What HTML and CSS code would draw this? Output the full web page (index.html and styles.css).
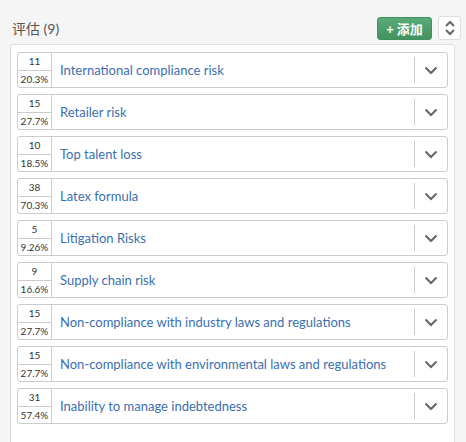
FILE: index.html
```html
<!DOCTYPE html>
<html>
<head>
<meta charset="utf-8">
<link rel="stylesheet" href="styles.css">
</head>
<body>
<div class="page">
  <div class="header">
    <div class="title">评估 (9)</div>
    <div class="actions">
      <button class="btn-add">+ 添加</button>
      <button class="btn-sort"><svg width="12" height="16" viewBox="0 0 12 16"><path d="M2 6 L6 2 L10 6" fill="none" stroke="#666" stroke-width="2"/><path d="M2 10 L6 14 L10 10" fill="none" stroke="#666" stroke-width="2"/></svg></button>
    </div>
  </div>
  <div class="panel">
    <div class="row"><div class="count"><div class="n">11</div><div class="p">20.3%</div></div><div class="name">International compliance risk</div><div class="chev"><svg width="14" height="9" viewBox="0 0 14 9"><path d="M1.5 1.5 L7 7 L12.5 1.5" fill="none" stroke="#666" stroke-width="2"/></svg></div></div>
    <div class="row"><div class="count"><div class="n">15</div><div class="p">27.7%</div></div><div class="name">Retailer risk</div><div class="chev"><svg width="14" height="9" viewBox="0 0 14 9"><path d="M1.5 1.5 L7 7 L12.5 1.5" fill="none" stroke="#666" stroke-width="2"/></svg></div></div>
    <div class="row"><div class="count"><div class="n">10</div><div class="p">18.5%</div></div><div class="name">Top talent loss</div><div class="chev"><svg width="14" height="9" viewBox="0 0 14 9"><path d="M1.5 1.5 L7 7 L12.5 1.5" fill="none" stroke="#666" stroke-width="2"/></svg></div></div>
    <div class="row"><div class="count"><div class="n">38</div><div class="p">70.3%</div></div><div class="name">Latex formula</div><div class="chev"><svg width="14" height="9" viewBox="0 0 14 9"><path d="M1.5 1.5 L7 7 L12.5 1.5" fill="none" stroke="#666" stroke-width="2"/></svg></div></div>
    <div class="row"><div class="count"><div class="n">5</div><div class="p">9.26%</div></div><div class="name">Litigation Risks</div><div class="chev"><svg width="14" height="9" viewBox="0 0 14 9"><path d="M1.5 1.5 L7 7 L12.5 1.5" fill="none" stroke="#666" stroke-width="2"/></svg></div></div>
    <div class="row"><div class="count"><div class="n">9</div><div class="p">16.6%</div></div><div class="name">Supply chain risk</div><div class="chev"><svg width="14" height="9" viewBox="0 0 14 9"><path d="M1.5 1.5 L7 7 L12.5 1.5" fill="none" stroke="#666" stroke-width="2"/></svg></div></div>
    <div class="row"><div class="count"><div class="n">15</div><div class="p">27.7%</div></div><div class="name">Non-compliance with industry laws and regulations</div><div class="chev"><svg width="14" height="9" viewBox="0 0 14 9"><path d="M1.5 1.5 L7 7 L12.5 1.5" fill="none" stroke="#666" stroke-width="2"/></svg></div></div>
    <div class="row"><div class="count"><div class="n">15</div><div class="p">27.7%</div></div><div class="name">Non-compliance with environmental laws and regulations</div><div class="chev"><svg width="14" height="9" viewBox="0 0 14 9"><path d="M1.5 1.5 L7 7 L12.5 1.5" fill="none" stroke="#666" stroke-width="2"/></svg></div></div>
    <div class="row"><div class="count"><div class="n">31</div><div class="p">57.4%</div></div><div class="name">Inability to manage indebtedness</div><div class="chev"><svg width="14" height="9" viewBox="0 0 14 9"><path d="M1.5 1.5 L7 7 L12.5 1.5" fill="none" stroke="#666" stroke-width="2"/></svg></div></div>
  </div>
</div>
</body>
</html>
```
FILE: styles.css
```css
html, body {
  margin: 0;
  padding: 0;
  background: #f5f5f5;
  font-family: Lato, "Noto Sans CJK SC", sans-serif;
  overflow: hidden;
}
.page {
  padding: 16px 5px 0 10px;
}
.header {
  display: flex;
  align-items: center;
  justify-content: space-between;
  height: 24px;
  margin-bottom: 4px;
}
.title {
  font-size: 14px;
  color: #555;
  padding-left: 2px;
}
.actions {
  display: flex;
  gap: 6px;
  align-items: center;
}
.btn-add {
  height: 23px;
  width: 55px;
  border: 1px solid #3f8f5f;
  border-radius: 3px;
  background: linear-gradient(#5aa97a, #43935f);
  color: #fff;
  font-family: Lato, "Noto Sans CJK SC", sans-serif;
  font-weight: bold;
  font-size: 13px;
  padding: 0;
  display: flex;
  align-items: center;
  justify-content: center;
}
.btn-sort {
  width: 23px;
  height: 24px;
  border: 1px solid #ddd;
  border-radius: 3px;
  background: #fff;
  padding: 0;
  display: flex;
  align-items: center;
  justify-content: center;
}
.panel {
  width: 431px;
  background: #fff;
  border: 1px solid #ddd;
  border-radius: 3px;
  padding: 7px 6px 40px 6px;
  display: flex;
  flex-direction: column;
  gap: 6px;
}
.row {
  display: flex;
  align-items: center;
  height: 34px;
  border: 1px solid #ccc;
  border-radius: 3px;
}
.count {
  width: 33px;
  height: 34px;
  border-right: 1px solid #ccc;
  display: flex;
  flex-direction: column;
  font-size: 10px;
  color: #333;
  text-align: center;
}
.count .n {
  height: 17px;
  line-height: 17px;
  border-bottom: 1px solid #ccc;
}
.count .p {
  height: 16px;
  line-height: 17px;
}
.name {
  flex: 1;
  padding-left: 8px;
  font-size: 13px;
  color: #3a6fb0;
}
.chev {
  width: 32px;
  height: 26px;
  border-left: 1px solid #ccc;
  display: flex;
  align-items: center;
  justify-content: center;
}
```
